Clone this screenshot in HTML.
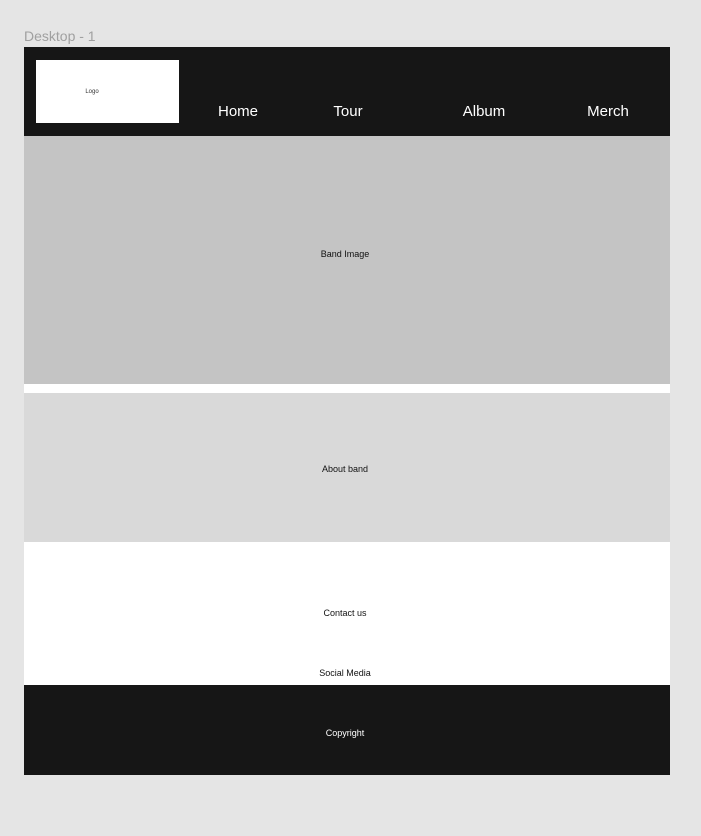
<!DOCTYPE html>
<html><head><meta charset="utf-8"><style>
body{margin:0;width:701px;height:836px;background:#e5e5e5;font-family:"Liberation Sans",sans-serif;position:relative;overflow:hidden}
.a{position:absolute}
.c{position:absolute;transform:translateX(-50%);white-space:nowrap}
</style></head><body>
<div class="a" style="left:24px;top:28px;font-size:14px;color:#a0a0a0">Desktop - 1</div>
<div class="a" style="left:24px;top:47px;width:646px;height:728px;background:#fff"></div>
<div class="a" style="left:24px;top:47px;width:646px;height:89px;background:#161616"></div>
<div class="a" style="left:36px;top:60px;width:143px;height:63px;background:#fff"></div>
<div class="c" style="left:92px;top:89px;font-size:6px;color:#333">Logo</div>
<div class="c" style="left:238px;top:103px;font-size:15px;color:#fff">Home</div>
<div class="c" style="left:348px;top:103px;font-size:15px;color:#fff">Tour</div>
<div class="c" style="left:484px;top:103px;font-size:15px;color:#fff">Album</div>
<div class="c" style="left:608px;top:103px;font-size:15px;color:#fff">Merch</div>
<div class="a" style="left:24px;top:136px;width:646px;height:248px;background:#c4c4c4"></div>
<div class="c" style="left:345px;top:249px;font-size:9px;color:#111">Band Image</div>
<div class="a" style="left:24px;top:393px;width:646px;height:149px;background:#d9d9d9"></div>
<div class="c" style="left:345px;top:464px;font-size:9px;color:#111">About band</div>
<div class="c" style="left:345px;top:608px;font-size:9px;color:#111">Contact us</div>
<div class="c" style="left:345px;top:668px;font-size:9px;color:#111">Social Media</div>
<div class="a" style="left:24px;top:685px;width:646px;height:90px;background:#161616"></div>
<div class="c" style="left:345px;top:728px;font-size:9px;color:#fff">Copyright</div>
</body></html>
